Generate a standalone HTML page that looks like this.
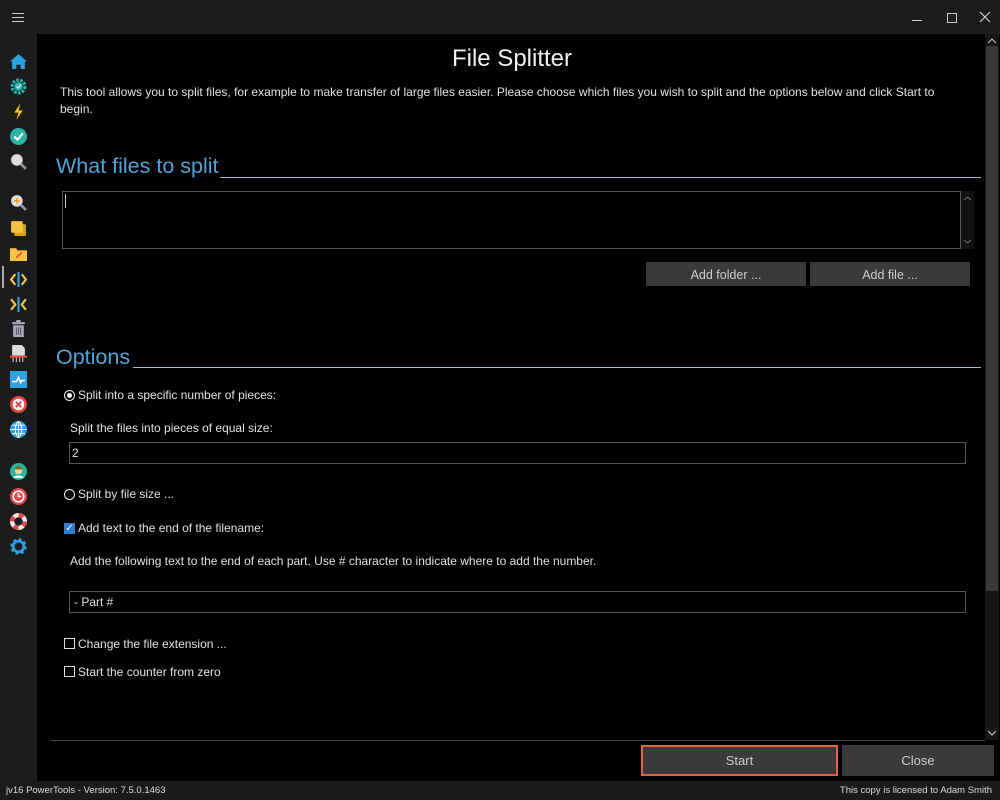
<!DOCTYPE html>
<html><head><style>
*{margin:0;padding:0;box-sizing:border-box}
body{width:1000px;height:800px;background:#000;font-family:"Liberation Sans",sans-serif;color:#ddd;position:relative;overflow:hidden;font-size:12px}
.abs{position:absolute}
#top{left:0;top:0;width:1000px;height:34px;background:#1c1c1c}
#side{left:0;top:0;width:37px;height:781px;background:#1c1c1c}
.ic{position:absolute;left:10px;width:17px;height:17px}
h1{position:absolute;left:37px;width:950px;top:45px;text-align:center;font-weight:normal;font-size:24px;color:#f0f0f0}
.h2{font-size:21.5px;color:#4fa3d8;white-space:nowrap}
.line{height:1px;background:#a8b8c8}
.box{border:1px solid #555;background:#000}
.btn{background:#3a3a3a;color:#ccc;text-align:center;font-size:12.5px}
.t{white-space:nowrap;font-size:12px;color:#e0e0e0}
.cb{width:11px;height:11px;border:1px solid #ddd}
</style></head><body>
<div id="top" class="abs"></div>
<div id="side" class="abs">
<div class="abs" style="left:12px;top:13px;width:12px;height:1px;background:#ccc;box-shadow:0 4px #ccc,0 8px #ccc"></div>
<svg class="ic" style="top:53px" viewBox="0 0 16 16"><path d="M8 1L0 8h2v7h4v-4h4v4h4V8h2z" fill="#2aa3df"/></svg>
<svg class="ic" style="top:78px" viewBox="0 0 16 16"><circle cx="8" cy="8" r="6" fill="none" stroke="#2bb5b0" stroke-width="3" stroke-dasharray="2.5 1.2"/><circle cx="8" cy="8" r="4" fill="#2bb5b0"/><path d="M6 8l1.5 1.5L10.5 6" stroke="#fff" fill="none"/></svg>
<svg class="ic" style="top:103px" viewBox="0 0 16 16"><path d="M10 0L4 9h4l-2 7 6-9H8z" fill="#f5c518"/></svg>
<svg class="ic" style="top:128px" viewBox="0 0 16 16"><circle cx="8" cy="8" r="8" fill="#2bb5a0"/><path d="M4 8l3 3 5-6" stroke="#fff" stroke-width="2" fill="none"/></svg>
<svg class="ic" style="top:153px" viewBox="0 0 16 16"><circle cx="6.5" cy="6.5" r="5.5" fill="#ddd"/><path d="M10 10l5 5" stroke="#999" stroke-width="2.5"/></svg>
<svg class="ic" style="top:194px" viewBox="0 0 16 16"><circle cx="6.5" cy="6.5" r="5.5" fill="#ddd"/><path d="M6.5 4v5M4 6.5h5" stroke="#e8a400" stroke-width="1.6"/><path d="M10 10l5 5" stroke="#999" stroke-width="2.5"/></svg>
<svg class="ic" style="top:220px" viewBox="0 0 16 16"><rect x="4" y="4" width="11" height="11" rx="1" fill="#d9a320"/><rect x="1" y="1" width="11" height="11" rx="1" fill="#f5c542"/></svg>
<svg class="ic" style="top:245px" viewBox="0 0 16 16"><path d="M0 3h6l1 2h9v10H0z" fill="#f5c542"/><path d="M6 12l5-5" stroke="#e44" stroke-width="1.5"/></svg>
<div class="abs" style="left:2px;top:266px;width:2px;height:22px;background:#aaa"></div>
<svg class="ic" style="top:271px" viewBox="0 0 16 16"><path d="M5 3L1 8l4 5M11 3l4 5-4 5" stroke="#f5c542" stroke-width="2" fill="none"/><path d="M8 1v14" stroke="#2aa3df" stroke-width="2"/></svg>
<svg class="ic" style="top:296px" viewBox="0 0 16 16"><path d="M1 3l4 5-4 5M15 3l-4 5 4 5" stroke="#f5c542" stroke-width="2" fill="none"/><path d="M8 1v14" stroke="#2aa3df" stroke-width="2"/></svg>
<svg class="ic" style="top:320px" viewBox="0 0 16 16"><rect x="2" y="2" width="12" height="2" fill="#aab"/><rect x="6" y="0" width="4" height="2" fill="#aab"/><rect x="3" y="5" width="10" height="11" fill="#aab"/><path d="M6 7v7M8 7v7M10 7v7" stroke="#556"/></svg>
<svg class="ic" style="top:345px" viewBox="0 0 16 16"><path d="M2 0h9l3 3v7H2z" fill="#ddd"/><rect x="0" y="10" width="16" height="2" fill="#e44"/><path d="M3 12v4M6 12v4M9 12v4M12 12v4" stroke="#ccc"/></svg>
<svg class="ic" style="top:371px" viewBox="0 0 16 16"><rect width="16" height="16" fill="#2aa3df"/><path d="M2 10h4l2-4 2 5 1-2h3" stroke="#fff" stroke-width="1.5" fill="none"/></svg>
<svg class="ic" style="top:396px" viewBox="0 0 16 16"><circle cx="8" cy="8" r="8" fill="#e04848"/><circle cx="8" cy="8" r="5.5" fill="#f4f4f4"/><path d="M5.5 5.5l5 5M10.5 5.5l-5 5" stroke="#e04848" stroke-width="1.8"/></svg>
<svg class="ic" style="top:421px" viewBox="0 0 16 16"><circle cx="8" cy="8" r="8" fill="#2aa3df"/><path d="M0 8h16M8 0v16M2 4h12M2 12h12M8 0c-4 4-4 12 0 16M8 0c4 4 4 12 0 16" stroke="#fff" fill="none" stroke-width=".9"/></svg>
<svg class="ic" style="top:463px" viewBox="0 0 16 16"><circle cx="8" cy="8" r="8" fill="#2bb5a0"/><circle cx="8" cy="7" r="3.5" fill="#f5d0a0"/><path d="M3 14c1-3 9-3 10 0" fill="#fff"/><path d="M4.5 6c0-4 7-4 7 0" fill="#8a5a2a"/></svg>
<svg class="ic" style="top:488px" viewBox="0 0 16 16"><circle cx="8" cy="8" r="8" fill="#e04848"/><circle cx="8" cy="8" r="5" fill="none" stroke="#fff" stroke-width="1.5"/><path d="M8 5v3h2.5" stroke="#fff" stroke-width="1.5" fill="none"/></svg>
<svg class="ic" style="top:513px" viewBox="0 0 16 16"><circle cx="8" cy="8" r="6" fill="none" stroke="#eee" stroke-width="4"/><circle cx="8" cy="8" r="6" fill="none" stroke="#e04848" stroke-width="4" stroke-dasharray="4.7 4.7"/></svg>
<svg class="ic" style="top:538px" viewBox="0 0 16 16"><circle cx="8" cy="8" r="6" fill="none" stroke="#2aa3df" stroke-width="3.5" stroke-dasharray="2.4 2.3"/><circle cx="8" cy="8" r="5" fill="none" stroke="#2aa3df" stroke-width="2.5"/></svg>
</div>
<div class="abs" style="left:912px;top:20px;width:10px;height:1px;background:#ccc"></div>
<div class="abs" style="left:947px;top:13px;width:10px;height:10px;border:1px solid #ccc"></div>
<svg class="abs" style="left:979px;top:11px" width="12" height="12"><path d="M1 1l10 10M11 1L1 11" stroke="#ccc" stroke-width="1.2"/></svg>
<h1>File Splitter</h1>
<div class="abs t" style="left:60px;top:84px;width:895px;white-space:normal;line-height:17px;font-size:12px">This tool allows you to split files, for example to make transfer of large files easier. Please choose which files you wish to split and the options below and click Start to begin.</div>
<div class="abs h2" style="left:56px;top:154px">What files to split</div>
<div class="abs line" style="left:220px;top:177px;width:761px"></div>
<div class="abs box" style="left:62px;top:191px;width:899px;height:58px"></div>
<div class="abs" style="left:65px;top:194px;width:1px;height:14px;background:#ccc"></div>
<div class="abs" style="left:961px;top:191px;width:13px;height:58px;background:#111"></div>
<svg class="abs" style="left:963px;top:195px" width="9" height="50"><path d="M1 5l3.5-3 3.5 3M1 45l3.5 3 3.5-3" stroke="#777" fill="none"/></svg>
<div class="abs btn" style="left:646px;top:262px;width:160px;height:24px;line-height:26px">Add folder ...</div>
<div class="abs btn" style="left:810px;top:262px;width:160px;height:24px;line-height:26px">Add file ...</div>
<div class="abs h2" style="left:56px;top:345px">Options</div>
<div class="abs line" style="left:133px;top:367px;width:848px"></div>
<div class="abs" style="left:64px;top:390px;width:11px;height:11px;border-radius:50%;border:1px solid #eee;background:#000"><div style="margin:2px;width:5px;height:5px;border-radius:50%;background:#fff"></div></div>
<div class="abs t" style="left:78px;top:388px">Split into a specific number of pieces:</div>
<div class="abs t" style="left:70px;top:421px">Split the files into pieces of equal size:</div>
<div class="abs box" style="left:69px;top:442px;width:897px;height:22px"></div>
<div class="abs t" style="left:72px;top:446px">2</div>
<div class="abs" style="left:64px;top:489px;width:11px;height:11px;border-radius:50%;border:1px solid #eee"></div>
<div class="abs t" style="left:78px;top:487px">Split by file size ...</div>
<div class="abs" style="left:64px;top:523px;width:11px;height:11px;background:#2a7fd0;color:#fff;font-size:10px;line-height:11px;text-align:center">✓</div>
<div class="abs t" style="left:78px;top:521px">Add text to the end of the filename:</div>
<div class="abs t" style="left:70px;top:554px">Add the following text to the end of each part. Use # character to indicate where to add the number.</div>
<div class="abs box" style="left:69px;top:591px;width:897px;height:22px"></div>
<div class="abs t" style="left:74px;top:595px">- Part #</div>
<div class="abs cb" style="left:64px;top:638px"></div>
<div class="abs t" style="left:78px;top:637px">Change the file extension ...</div>
<div class="abs cb" style="left:64px;top:666px"></div>
<div class="abs t" style="left:78px;top:665px">Start the counter from zero</div>
<div class="abs" style="left:985px;top:34px;width:14px;height:706px;background:#151515"></div>
<div class="abs" style="left:986px;top:46px;width:12px;height:545px;background:#3a3a3a"></div>
<svg class="abs" style="left:987px;top:37px" width="10" height="8"><path d="M1 6l4-4 4 4" stroke="#ccc" fill="none"/></svg>
<svg class="abs" style="left:987px;top:729px" width="10" height="8"><path d="M1 2l4 4 4-4" stroke="#ccc" fill="none"/></svg>
<div class="abs" style="left:50px;top:740px;width:935px;height:1px;background:#444"></div>
<div class="abs btn" style="left:641px;top:745px;width:197px;height:31px;line-height:27px;border:2px solid #e8613c;font-size:13px">Start</div>
<div class="abs btn" style="left:842px;top:745px;width:152px;height:31px;line-height:31px;font-size:13px">Close</div>
<div class="abs" style="left:0;top:781px;width:1000px;height:19px;background:#1a1a1a"></div>
<div class="abs" style="left:6px;top:785px;font-size:9.5px;color:#ddd">jv16 PowerTools - Version: 7.5.0.1463</div>
<div class="abs" style="right:8px;top:785px;font-size:9.5px;color:#ddd">This copy is licensed to Adam Smith</div>
</body></html>
